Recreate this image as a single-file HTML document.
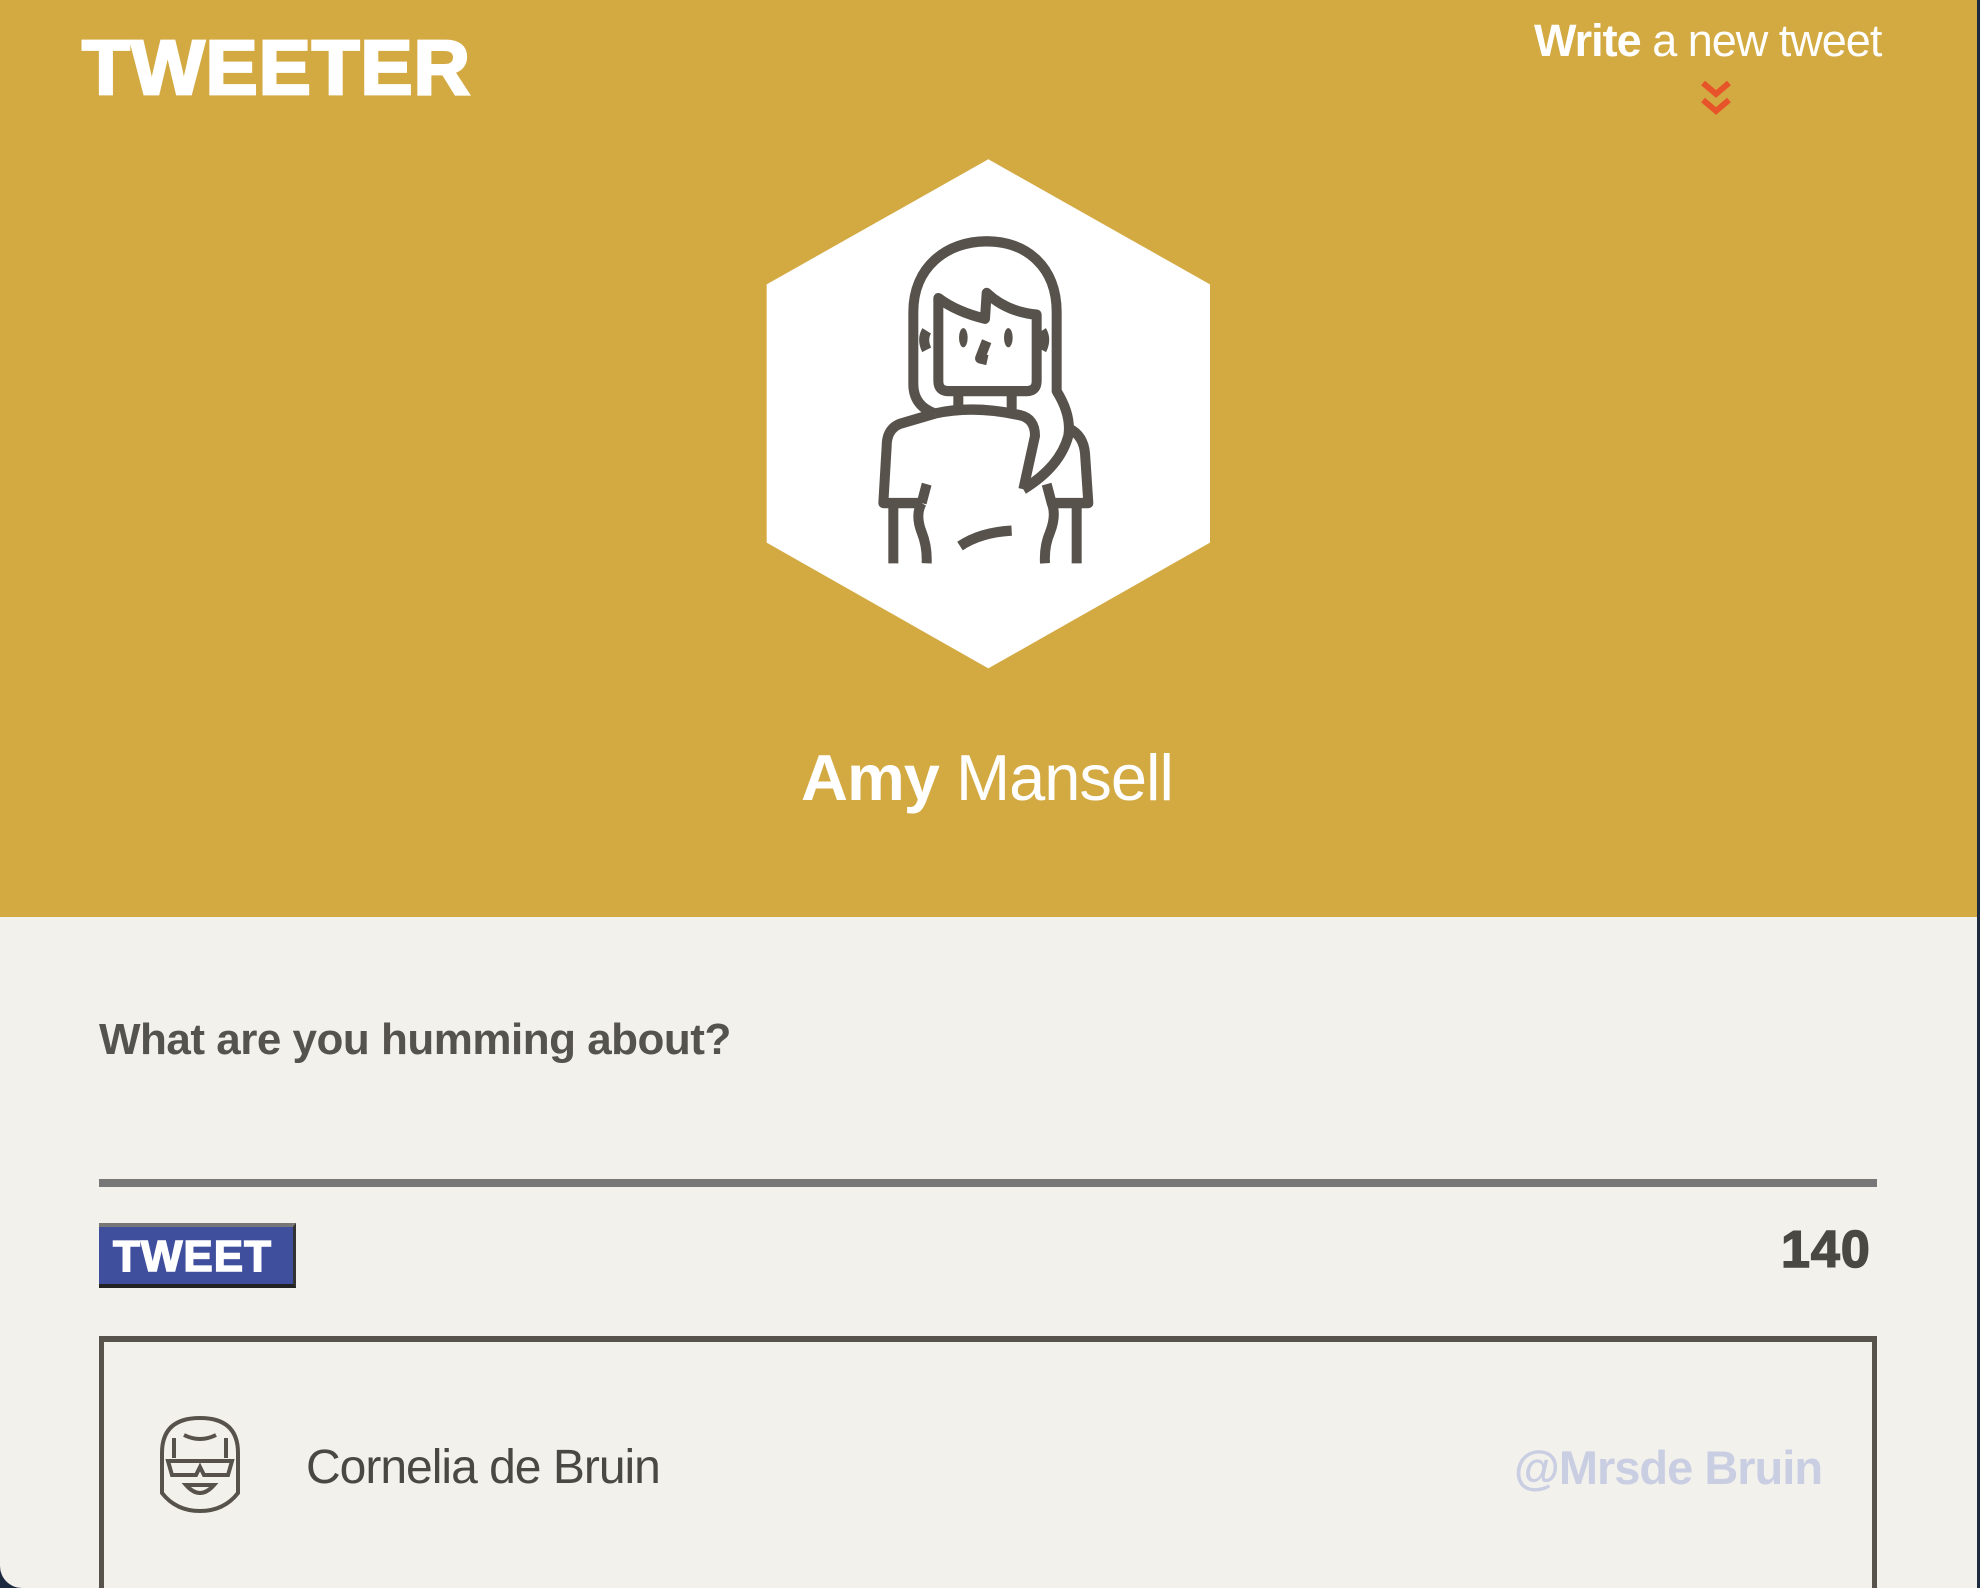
<!DOCTYPE html>
<html><head><meta charset="utf-8"><style>
*{margin:0;padding:0;box-sizing:border-box}
html,body{width:1980px;height:1588px;overflow:hidden;background:#1c2a40}
#page{position:absolute;left:0;top:0;width:1977px;height:1588px;background:#F3F1EC;border-bottom-left-radius:22px;overflow:hidden}
#hdr{position:absolute;left:0;top:0;width:1977px;height:917px;background:#D3A941}
.abs{position:absolute;white-space:nowrap;font-family:"Liberation Sans",sans-serif}
#logo{left:82px;top:24px;font-size:86px;font-weight:900;color:#fff;letter-spacing:1px;transform:scale(0.91,0.9);transform-origin:top left;-webkit-text-stroke:3px #fff}
#write{left:1534px;top:15px;font-size:45px;color:#fff;letter-spacing:-1px}
#name{left:801px;top:740px;font-size:65px;color:#fff;letter-spacing:-1px}
#q{left:99px;top:1015px;font-size:44px;font-weight:bold;color:#55534e;letter-spacing:-0.5px}
#line{position:absolute;left:99px;top:1179px;width:1778px;height:8px;background:#777}
#btn{position:absolute;left:99px;top:1223px;width:197px;height:65px;background:#3F4F9D;border-top:4px solid #777;border-bottom:4px solid #222;border-right:3px solid #333}
#btn span{position:absolute;left:14px;top:5px;font-family:"Liberation Sans",sans-serif;font-weight:900;font-size:44px;color:#fff;-webkit-text-stroke:1.5px #fff;letter-spacing:1px}
#cnt{left:1781px;top:1220px;font-size:52px;font-weight:900;color:#4a4843;-webkit-text-stroke:1.5px #4a4843;letter-spacing:1px}
#card{position:absolute;left:99px;top:1336px;width:1778px;height:300px;border:5px solid #57534c;border-top-width:6px}
#cn{left:306px;top:1440px;font-size:48px;color:#4a4843;letter-spacing:-1px}
#handle{left:1514px;top:1440px;font-size:47px;font-weight:bold;color:#c9cee2;letter-spacing:-1px}
</style></head><body>
<div id="page">
<div id="hdr"></div>
<div class="abs" id="logo">TWEETER</div>
<div class="abs" id="write"><b>Write</b> a new tweet</div>
<svg class="abs" style="left:1700px;top:80px" width="32" height="40" viewBox="0 0 32 40"><path d="M3 3 L16 14 L29 3 M3 20 L16 31 L29 20" fill="none" stroke="#E8542A" stroke-width="6"/></svg>
<svg class="abs" style="left:740px;top:150px" width="500" height="558" viewBox="0 0 1500 1620" preserveAspectRatio="none">
<polygon points="745,27 1410,390 1410,1140 745,1505 80,1140 80,390" fill="#fff"/>
<g fill="none" stroke="#57534c" stroke-width="30" stroke-linejoin="round" stroke-linecap="butt">
<path d="M585 765 C540 750 520 720 520 680 L520 470 C520 340 620 265 740 265 C860 265 950 340 950 470 L950 700 Q995 770 985 830 Q960 920 850 985"/>
<path d="M595 430 L595 670 Q595 700 625 700 L860 700 Q890 700 890 670 L890 478 Q800 470 740 415 L735 490 Q650 470 595 430 Z"/>
<path d="M560 525 Q545 550 560 580 M905 525 Q920 550 905 580"/>
<path d="M740 555 L720 605 L742 610"/>
<path d="M655 700 L655 760 M815 700 L815 760"/>
<path d="M585 765 L480 795 Q440 810 440 860 L430 1025 L545 1025 M560 970 L545 1025"/>
<path d="M585 765 Q700 740 840 770 Q885 780 885 830 L850 985"/>
<path d="M460 1025 L460 1200 M1010 1025 L1010 1200"/>
<path d="M545 1025 Q525 1060 545 1110 Q562 1150 560 1200"/>
<path d="M990 810 Q1030 830 1035 880 L1045 1025 L935 1025 L920 970"/>
<path d="M935 1025 Q950 1060 930 1110 Q912 1150 915 1200"/>
<path d="M660 1150 Q720 1110 815 1105"/>
</g>
<g fill="#57534c"><ellipse cx="670" cy="545" rx="13" ry="28"/><ellipse cx="805" cy="545" rx="13" ry="28"/></g>
</svg>
<div class="abs" id="name"><b>Amy</b> Mansell</div>
<div class="abs" id="q">What are you humming about?</div>
<div id="line"></div>
<div id="btn"><span>TWEET</span></div>
<div class="abs" id="cnt">140</div>
<div id="card"></div>
<svg class="abs" style="left:154px;top:1413px" width="92" height="103" viewBox="0 0 92 103">
<g fill="none" stroke="#57534c" stroke-width="4">
<path d="M8 80 L8 40 Q8 5 46 5 Q84 5 84 40 L84 80 Q70 98 46 98 Q22 98 8 80 Z"/>
<path d="M20 45 L20 25 M72 45 L72 25 M30 22 Q46 30 62 22"/>
<path d="M14 48 L78 48 L74 62 L50 62 L46 54 L42 62 L18 62 Z"/>
<path d="M32 72 Q46 88 60 72 Z"/>
</g></svg>
<div class="abs" id="cn">Cornelia de Bruin</div>
<div class="abs" id="handle">@Mrsde Bruin</div>
</div>
</body></html>
